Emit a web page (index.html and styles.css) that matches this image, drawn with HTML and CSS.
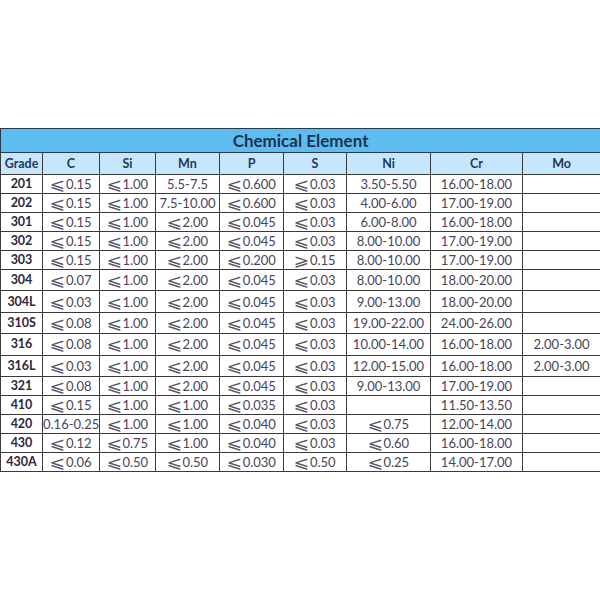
FILE: index.html
```html
<!DOCTYPE html>
<html>
<head>
<meta charset="utf-8">
<link rel="stylesheet" href="styles.css">
</head>
<body>
<div class="page">
<table class="chem">
<colgroup>
<col class="c-grade"><col class="c-c"><col class="c-si"><col class="c-mn"><col class="c-p"><col class="c-s"><col class="c-ni"><col class="c-cr"><col class="c-mo">
</colgroup>
<thead>
<tr class="title"><th colspan="9">Chemical Element</th></tr>
<tr class="head"><th>Grade</th><th>C</th><th>Si</th><th>Mn</th><th>P</th><th>S</th><th>Ni</th><th>Cr</th><th>Mo</th></tr>
</thead>
<tbody>
<tr><th>201</th><td><span class="le">⩽</span>0.15</td><td><span class="le">⩽</span>1.00</td><td>5.5-7.5</td><td><span class="le">⩽</span>0.600</td><td><span class="le">⩽</span>0.03</td><td>3.50-5.50</td><td>16.00-18.00</td><td></td></tr>
<tr><th>202</th><td><span class="le">⩽</span>0.15</td><td><span class="le">⩽</span>1.00</td><td>7.5-10.00</td><td><span class="le">⩽</span>0.600</td><td><span class="le">⩽</span>0.03</td><td>4.00-6.00</td><td>17.00-19.00</td><td></td></tr>
<tr><th>301</th><td><span class="le">⩽</span>0.15</td><td><span class="le">⩽</span>1.00</td><td><span class="le">⩽</span>2.00</td><td><span class="le">⩽</span>0.045</td><td><span class="le">⩽</span>0.03</td><td>6.00-8.00</td><td>16.00-18.00</td><td></td></tr>
<tr><th>302</th><td><span class="le">⩽</span>0.15</td><td><span class="le">⩽</span>1.00</td><td><span class="le">⩽</span>2.00</td><td><span class="le">⩽</span>0.045</td><td><span class="le">⩽</span>0.03</td><td>8.00-10.00</td><td>17.00-19.00</td><td></td></tr>
<tr><th>303</th><td><span class="le">⩽</span>0.15</td><td><span class="le">⩽</span>1.00</td><td><span class="le">⩽</span>2.00</td><td><span class="le">⩽</span>0.200</td><td><span class="le">⩾</span>0.15</td><td>8.00-10.00</td><td>17.00-19.00</td><td></td></tr>
<tr class="tall"><th>304</th><td><span class="le">⩽</span>0.07</td><td><span class="le">⩽</span>1.00</td><td><span class="le">⩽</span>2.00</td><td><span class="le">⩽</span>0.045</td><td><span class="le">⩽</span>0.03</td><td>8.00-10.00</td><td>18.00-20.00</td><td></td></tr>
<tr class="tall"><th>304L</th><td><span class="le">⩽</span>0.03</td><td><span class="le">⩽</span>1.00</td><td><span class="le">⩽</span>2.00</td><td><span class="le">⩽</span>0.045</td><td><span class="le">⩽</span>0.03</td><td>9.00-13.00</td><td>18.00-20.00</td><td></td></tr>
<tr class="tall"><th>310S</th><td><span class="le">⩽</span>0.08</td><td><span class="le">⩽</span>1.00</td><td><span class="le">⩽</span>2.00</td><td><span class="le">⩽</span>0.045</td><td><span class="le">⩽</span>0.03</td><td>19.00-22.00</td><td>24.00-26.00</td><td></td></tr>
<tr class="tall"><th>316</th><td><span class="le">⩽</span>0.08</td><td><span class="le">⩽</span>1.00</td><td><span class="le">⩽</span>2.00</td><td><span class="le">⩽</span>0.045</td><td><span class="le">⩽</span>0.03</td><td>10.00-14.00</td><td>16.00-18.00</td><td>2.00-3.00</td></tr>
<tr class="tall"><th>316L</th><td><span class="le">⩽</span>0.03</td><td><span class="le">⩽</span>1.00</td><td><span class="le">⩽</span>2.00</td><td><span class="le">⩽</span>0.045</td><td><span class="le">⩽</span>0.03</td><td>12.00-15.00</td><td>16.00-18.00</td><td>2.00-3.00</td></tr>
<tr><th>321</th><td><span class="le">⩽</span>0.08</td><td><span class="le">⩽</span>1.00</td><td><span class="le">⩽</span>2.00</td><td><span class="le">⩽</span>0.045</td><td><span class="le">⩽</span>0.03</td><td>9.00-13.00</td><td>17.00-19.00</td><td></td></tr>
<tr><th>410</th><td><span class="le">⩽</span>0.15</td><td><span class="le">⩽</span>1.00</td><td><span class="le">⩽</span>1.00</td><td><span class="le">⩽</span>0.035</td><td><span class="le">⩽</span>0.03</td><td></td><td>11.50-13.50</td><td></td></tr>
<tr><th>420</th><td>0.16-0.25</td><td><span class="le">⩽</span>1.00</td><td><span class="le">⩽</span>1.00</td><td><span class="le">⩽</span>0.040</td><td><span class="le">⩽</span>0.03</td><td><span class="le">⩽</span>0.75</td><td>12.00-14.00</td><td></td></tr>
<tr><th>430</th><td><span class="le">⩽</span>0.12</td><td><span class="le">⩽</span>0.75</td><td><span class="le">⩽</span>1.00</td><td><span class="le">⩽</span>0.040</td><td><span class="le">⩽</span>0.03</td><td><span class="le">⩽</span>0.60</td><td>16.00-18.00</td><td></td></tr>
<tr><th>430A</th><td><span class="le">⩽</span>0.06</td><td><span class="le">⩽</span>0.50</td><td><span class="le">⩽</span>0.50</td><td><span class="le">⩽</span>0.030</td><td><span class="le">⩽</span>0.50</td><td><span class="le">⩽</span>0.25</td><td>14.00-17.00</td><td></td></tr>
</tbody>
</table>
</div>
</body>
</html>
```
FILE: styles.css
```css
html, body {
  margin: 0;
  background: #ffffff;
}
.page {
  padding-top: 128px;
  width: 600px;
}
.chem {
  width: 600px;
  border-collapse: collapse;
  table-layout: fixed;
  font-family: Lato, "Open Sans", "Liberation Sans", sans-serif;
  font-size: 13px;
  color: #4a4458;
}
.c-grade { width: 42px; }
.c-c { width: 57px; }
.c-si { width: 56px; }
.c-mn { width: 64px; }
.c-p { width: 64px; }
.c-s { width: 63px; }
.c-ni { width: 84px; }
.c-cr { width: 92px; }
.c-mo { width: 78px; }
.chem th, .chem td {
  border: 1px solid #3a3a3a;
  padding: 0;
  text-align: center;
  height: 18px;
  line-height: 18px;
  white-space: nowrap;
  overflow: hidden;
}
.title th {
  background: #5dbdf1;
  color: #1d3350;
  font-size: 17px;
  font-weight: bold;
  height: 23px;
  line-height: 23px;
  border-color: #2a3a4a;
}
.head th {
  background: #c6e7fb;
  color: #1f3a5a;
  font-size: 12.5px;
  font-weight: bold;
  height: 21px;
  line-height: 21px;
}
tbody th {
  color: #2d2740;
  font-weight: bold;
  font-size: 12.5px;
}
.tall th, .tall td {
  height: 20.4px;
  line-height: 20px;
}
.le {
  display: inline-block;
  font-family: "DejaVu Sans", sans-serif;
  font-size: 15px;
  line-height: 10px;
  color: #5a5468;
  transform: scale(1.25, 1.1);
  margin: 0 2px 0 1px;
}
```
